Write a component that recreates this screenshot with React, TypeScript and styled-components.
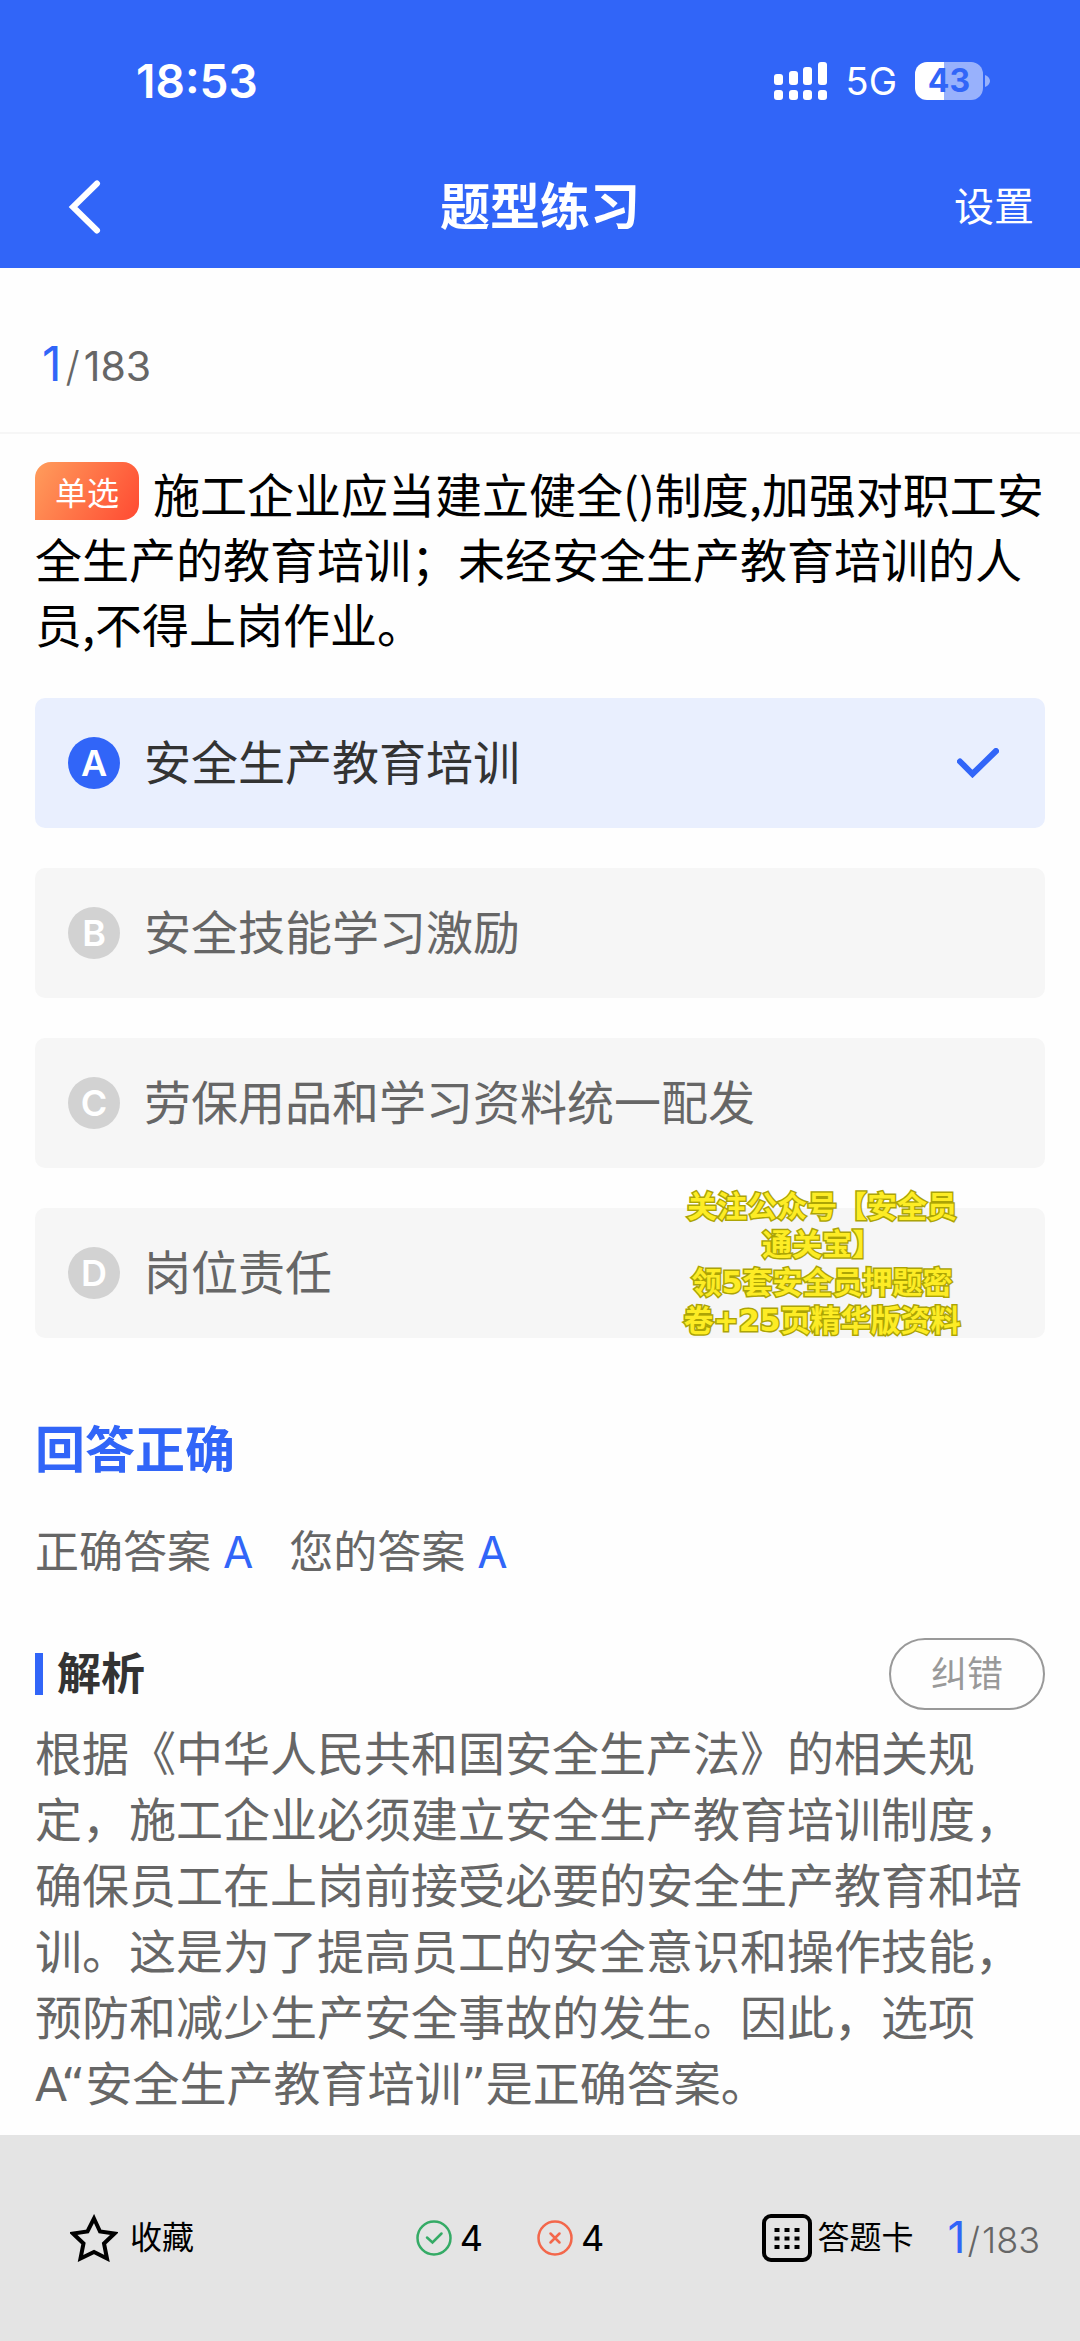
import React, { useState } from "react";
import styled, { createGlobalStyle } from "styled-components";

const BLUE = "#3165f8";

const GlobalStyle = createGlobalStyle`
  *, *::before, *::after { box-sizing: border-box; }
  body {
    margin: 0;
    background: #fefefe;
    color: #000;
    font-family: Inter, "Noto Sans CJK SC", sans-serif;
  }
  h1, h2, h3, p { margin: 0; }
  button {
    border: 0;
    padding: 0;
    background: none;
    color: inherit;
    font: inherit;
    cursor: pointer;
  }
  svg { display: block; flex: none; }
`;

const Page = styled.div`
  display: flex;
  flex-direction: column;
  min-height: 100vh;
`;

const Header = styled.header`
  background: ${BLUE};
  color: #fff;
`;

const StatusBar = styled.div`
  display: flex;
  align-items: center;
  justify-content: space-between;
  height: 146px;
  padding: 16px 90px 0 136px;
`;

const Clock = styled.time`
  font-size: 46px;
  font-weight: 600;
  line-height: 56px;
`;

const StatusIcons = styled.div`
  display: flex;
  align-items: center;
  gap: 18px;
`;

const Network = styled.span`
  font-size: 38px;
  font-weight: 400;
  line-height: 46px;
`;

const Battery = styled.div`
  display: flex;
  align-items: center;
  gap: 2px;
`;

const BatteryBody = styled.div<{ $level: number }>`
  width: 68px;
  height: 38px;
  border-radius: 12px;
  background: linear-gradient(
    to right,
    #fff ${(p) => p.$level}%,
    #98b1fc ${(p) => p.$level}%
  );
  color: ${BLUE};
  font-size: 32px;
  font-weight: 700;
  line-height: 38px;
  text-align: center;
`;

const NavBar = styled.nav`
  display: grid;
  grid-template-columns: 1fr auto 1fr;
  align-items: center;
  height: 122px;
  padding: 0 46px;
`;

const BackButton = styled.button`
  justify-self: start;
  padding-left: 22px;
`;

const NavTitle = styled.h1`
  font-size: 50px;
  font-weight: 600;
  line-height: 60px;
`;

const SettingsButton = styled.button`
  justify-self: end;
  font-size: 40px;
  line-height: 60px;
`;

const ProgressBar = styled.div`
  height: 166px;
  padding: 66px 42px 0;
  border-bottom: 2px solid #f6f6f6;
`;

const Counter = styled.span<{ $small?: boolean }>`
  color: #666;
  font-size: ${(p) => (p.$small ? 36 : 41)}px;
  font-weight: ${(p) => (p.$small ? 300 : 400)};
  line-height: 60px;
  white-space: nowrap;

  b {
    color: ${BLUE};
    font-size: ${(p) => (p.$small ? 44 : 48)}px;
    font-weight: 400;
  }
`;

const Slash = styled.span<{ $small?: boolean }>`
  margin: 0 ${(p) => (p.$small ? 2 : 4)}px;
  font-weight: 300;
`;

const Content = styled.main`
  flex: 1;
  padding: 26px 35px 16px;
`;

const Question = styled.h2`
  margin-right: -8px;
  font-family: "Noto Sans CJK SC", sans-serif;
  font-size: 47px;
  font-weight: 400;
  line-height: 65px;
`;

const TypeBadge = styled.span`
  display: inline-block;
  height: 58px;
  margin: 2px 14px 5px 0;
  padding: 0 20px;
  border-radius: 16px 16px 16px 0;
  background: linear-gradient(120deg, #ff9d5c, #ff4a32);
  color: #fff;
  font-size: 32px;
  line-height: 58px;
  vertical-align: top;
`;

const OptionList = styled.div`
  position: relative;
  display: flex;
  flex-direction: column;
  gap: 40px;
  margin-top: 43px;
`;

const Option = styled.label<{ $selected: boolean }>`
  display: flex;
  align-items: center;
  gap: 24px;
  min-height: 130px;
  padding: 0 46px 0 33px;
  border-radius: 10px;
  background: ${(p) => (p.$selected ? "#e9effe" : "#f6f6f6")};
  color: ${(p) => (p.$selected ? "#333" : "#666")};
  font-size: 47px;
  line-height: 66px;
  cursor: pointer;
`;

const OptionText = styled.span`
  flex: 1;
`;

const Bullet = styled.span`
  display: grid;
  place-items: center;
  width: 52px;
  height: 52px;
`;

const Radio = styled.input`
  grid-area: 1 / 1;
  width: 52px;
  height: 52px;
  margin: 0;
  border-radius: 50%;
  appearance: none;
  background: #d2d2d2;

  &:checked {
    background: ${BLUE};
  }
`;

const Letter = styled.span`
  grid-area: 1 / 1;
  z-index: 1;
  color: #fff;
  font-size: 36px;
  font-weight: 600;
  line-height: 52px;
`;

const Promo = styled.p`
  position: absolute;
  right: 78px;
  bottom: -2px;
  width: 290px;
  color: #fdec25;
  font-family: "DejaVu Sans", "Noto Sans CJK SC", sans-serif;
  font-size: 30px;
  font-weight: 700;
  line-height: 38px;
  text-align: center;
  white-space: nowrap;
  -webkit-text-stroke: 3px #aca406;
  paint-order: stroke fill;
  pointer-events: none;
`;

const ResultTitle = styled.h2`
  margin-top: 82px;
  color: ${BLUE};
  font-size: 50px;
  font-weight: 600;
  line-height: 60px;
`;

const Answers = styled.p`
  display: flex;
  gap: 36px;
  margin-top: 42px;
  color: #666;
  font-size: 44px;
  line-height: 60px;

  b {
    margin-left: 12px;
    color: ${BLUE};
    font-weight: 400;
  }
`;

const SectionHead = styled.div`
  display: flex;
  align-items: center;
  justify-content: space-between;
  margin-top: 56px;
`;

const SectionTitle = styled.h3`
  display: flex;
  align-items: center;
  gap: 14px;
  color: #333;
  font-size: 44px;
  font-weight: 600;
  line-height: 60px;

  &::before {
    content: "";
    width: 8px;
    height: 42px;
    background: ${BLUE};
  }
`;

const ReportButton = styled.button`
  height: 72px;
  padding: 0 40px;
  border: 2px solid #999;
  border-radius: 36px;
  color: #999;
  font-size: 36px;
  line-height: 60px;
`;

const Explanation = styled.p`
  margin-top: 12px;
  color: #666;
  font-family: "DejaVu Sans", "Noto Sans CJK SC", sans-serif;
  font-size: 47px;
  line-height: 66px;
`;

const Footer = styled.footer`
  display: grid;
  grid-template-columns: 1fr 1fr auto;
  align-items: center;
  height: 206px;
  padding: 0 40px 0 70px;
  background: #e4e4e4;
`;

const FooterGroup = styled.div<{ $gap: number }>`
  display: flex;
  align-items: center;
  gap: ${(p) => p.$gap}px;
`;

const FooterButton = styled.button<{ $gap: number }>`
  display: flex;
  align-items: center;
  gap: ${(p) => p.$gap}px;
  font-size: 32px;
  line-height: 60px;
`;

const Tally = styled.span`
  display: flex;
  align-items: center;
  gap: 8px;
  font-size: 36px;
  line-height: 60px;
`;

const SignalIcon = () => {
  const bars = [
    [0, 12, 11],
    [15, 9, 14],
    [29, 5, 18],
    [44, 0, 23],
  ];
  return (
    <svg width="54" height="38" viewBox="0 0 54 38" fill="#fff" aria-hidden="true">
      {bars.map(([x, y, h]) => (
        <React.Fragment key={x}>
          <rect x={x} y={y} width="9" height={h} rx="3" />
          <rect x={x} y="28" width="9" height="10" rx="3" />
        </React.Fragment>
      ))}
    </svg>
  );
};

const BatteryTip = () => (
  <svg width="5" height="12" viewBox="0 0 5 12" aria-hidden="true">
    <path d="M0 0C3 1 5 3.500 5 6S3 11 0 12Z" fill="#98b1fc" />
  </svg>
);

const BackIcon = () => (
  <svg width="34" height="54" viewBox="0 0 34 54" fill="none" stroke="#fff" strokeWidth="6" strokeLinecap="round" aria-hidden="true">
    <path d="M29 3.500L5 27L29 50.500" />
  </svg>
);

const TickIcon = () => (
  <svg width="42" height="30" viewBox="0 0 42 30" fill="none" stroke={BLUE} strokeWidth="6" strokeLinecap="round" aria-hidden="true">
    <path d="M3 13.500L15.500 26L39 3" />
  </svg>
);

const StarIcon = () => (
  <svg width="48" height="48" viewBox="0 0 48 48" fill="none" stroke="#000" strokeWidth="4" aria-hidden="true">
    <path d="M24 4.500L30 17.500L44.500 19.500L34 29.500L37 44.500L24 38L10.500 44.500L13.500 29.500L3 19.500L17.500 17.500Z" />
  </svg>
);

const CorrectIcon = () => (
  <svg width="36" height="36" viewBox="0 0 36 36" fill="none" stroke="#35ab66" strokeWidth="2.500" strokeLinecap="round" aria-hidden="true">
    <circle cx="18" cy="18" r="16.500" />
    <path d="M11 17.500L16.500 22.500L25.500 13.500" />
  </svg>
);

const WrongIcon = () => (
  <svg width="36" height="36" viewBox="0 0 36 36" fill="none" stroke="#f3674b" strokeWidth="2.500" strokeLinecap="round" aria-hidden="true">
    <circle cx="18" cy="18" r="16.500" />
    <path d="M13.500 13.500L22.500 22.500M22.500 13.500L13.500 22.500" />
  </svg>
);

const CardIcon = () => (
  <svg width="50" height="48" viewBox="0 0 50 48" aria-hidden="true">
    <rect x="2" y="2" width="46" height="44" rx="7" fill="none" stroke="#000" strokeWidth="4" />
    {[14, 22.5, 31].map((y) =>
      [12.5, 22.5, 32.5].map((x) => <rect key={`${x}-${y}`} x={x} y={y} width="5" height="4" />)
    )}
  </svg>
);

const OPTIONS = [
  { letter: "A", text: "安全生产教育培训" },
  { letter: "B", text: "安全技能学习激励" },
  { letter: "C", text: "劳保用品和学习资料统一配发" },
  { letter: "D", text: "岗位责任" },
];

export default function App() {
  const [choice, setChoice] = useState("A");

  return (
    <>
      <GlobalStyle />
      <Page>
        <Header>
          <StatusBar>
            <Clock>18:53</Clock>
            <StatusIcons>
              <SignalIcon />
              <Network>5G</Network>
              <Battery>
                <BatteryBody $level={43}>43</BatteryBody>
                <BatteryTip />
              </Battery>
            </StatusIcons>
          </StatusBar>
          <NavBar>
            <BackButton type="button" aria-label="返回">
              <BackIcon />
            </BackButton>
            <NavTitle>题型练习</NavTitle>
            <SettingsButton type="button">设置</SettingsButton>
          </NavBar>
        </Header>

        <ProgressBar>
          <Counter>
            <b>1</b>
            <Slash>/</Slash>183
          </Counter>
        </ProgressBar>

        <Content>
          <Question>
            <TypeBadge>单选</TypeBadge>
            施工企业应当建立健全()制度,加强对职工安全生产的教育培训；未经安全生产教育培训的人员,不得上岗作业。
          </Question>

          <OptionList role="radiogroup">
            {OPTIONS.map(({ letter, text }) => (
              <Option key={letter} $selected={choice === letter}>
                <Bullet>
                  <Radio
                    type="radio"
                    name="answer"
                    value={letter}
                    checked={choice === letter}
                    onChange={() => setChoice(letter)}
                  />
                  <Letter>{letter}</Letter>
                </Bullet>
                <OptionText>{text}</OptionText>
                {choice === letter && <TickIcon />}
              </Option>
            ))}
            <Promo>
              关注公众号【安全员
              <br />
              通关宝】
              <br />
              领5套安全员押题密
              <br />
              卷+25页精华版资料
            </Promo>
          </OptionList>

          <ResultTitle>回答正确</ResultTitle>
          <Answers>
            <span>
              正确答案<b>A</b>
            </span>
            <span>
              您的答案<b>{choice}</b>
            </span>
          </Answers>

          <SectionHead>
            <SectionTitle>解析</SectionTitle>
            <ReportButton type="button">纠错</ReportButton>
          </SectionHead>
          <Explanation>
            根据《中华人民共和国安全生产法》的相关规定，施工企业必须建立安全生产教育培训制度，确保员工在上岗前接受必要的安全生产教育和培训。这是为了提高员工的安全意识和操作技能，预防和减少生产安全事故的发生。因此，选项A“安全生产教育培训”是正确答案。
          </Explanation>
        </Content>

        <Footer>
          <FooterButton type="button" $gap={12}>
            <StarIcon />
            收藏
          </FooterButton>
          <FooterGroup $gap={54}>
            <Tally>
              <CorrectIcon />4
            </Tally>
            <Tally>
              <WrongIcon />4
            </Tally>
          </FooterGroup>
          <FooterGroup $gap={34}>
            <FooterButton type="button" $gap={6}>
              <CardIcon />
              答题卡
            </FooterButton>
            <Counter $small>
              <b>1</b>
              <Slash $small>/</Slash>183
            </Counter>
          </FooterGroup>
        </Footer>
      </Page>
    </>
  );
}
